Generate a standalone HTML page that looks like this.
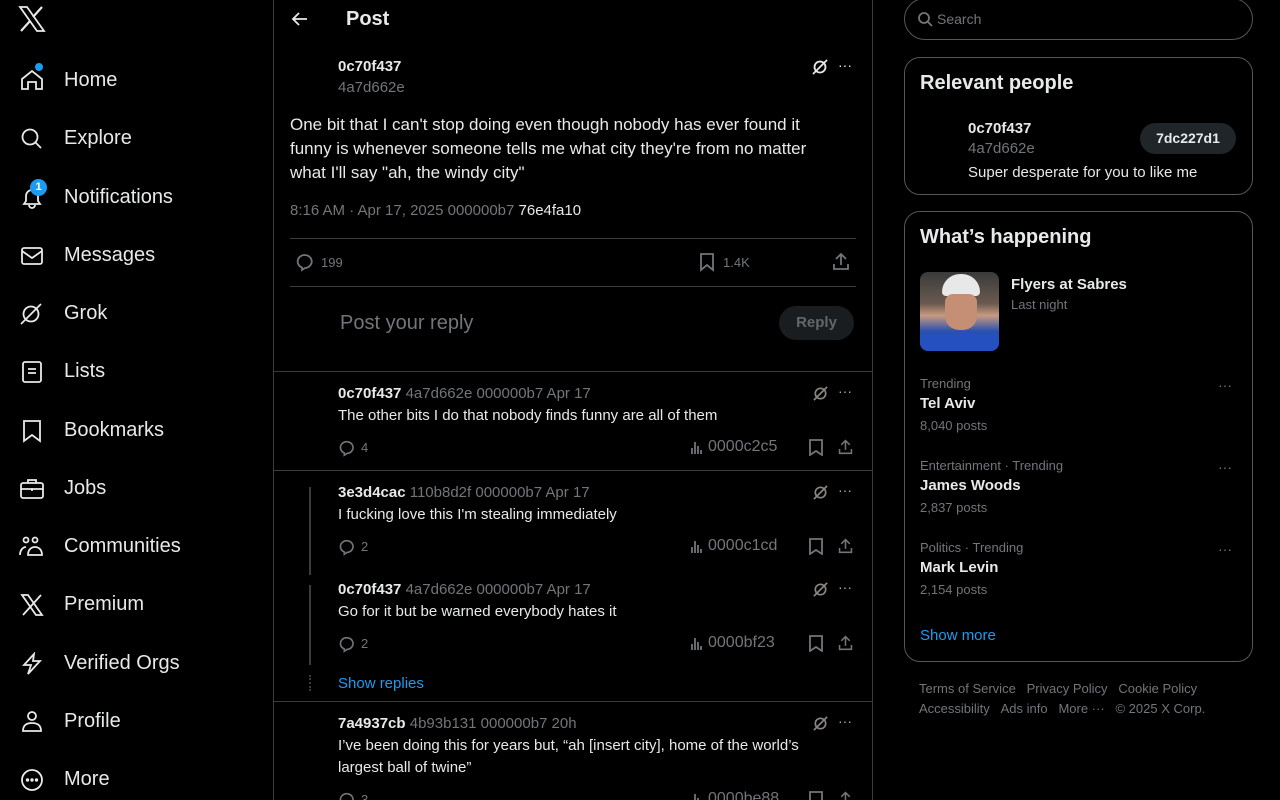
<!DOCTYPE html>
<html><head><meta charset="utf-8"><style>
*{box-sizing:border-box;margin:0;padding:0}
html{width:1280px;height:800px;overflow:hidden;background:#000}
body{width:1280px;height:800px;background:#000;color:#e7e9ea;font-family:"Liberation Sans",sans-serif;overflow:hidden;position:relative}
.a{position:absolute;white-space:nowrap}
.g{color:#71767b}
.b{font-weight:bold}
svg{position:absolute;fill:none;stroke:#e7e9ea;stroke-width:1.8}
.nav{font-size:20px;left:64px}
.line{position:absolute;background:#3e3b37}
.s15{font-size:15px}
.s13{font-size:13px}
.ic{stroke:#71767b}
</style></head><body>
<!-- left nav -->
<svg style="left:18px;top:6px" width="28" height="26" viewBox="0 0 28 26"><path d="M2 1h7l17 24h-7z" stroke-width="1.8"/><path d="M24 1L15 11M12 15L3 25" stroke-width="2.2"/></svg>
<svg style="left:20px;top:68px" width="24" height="24" viewBox="0 0 24 24"><path d="M2 11L12 3l10 8v10h-6v-7H8v7H2z"/></svg>
<div class="a" style="left:35px;top:63px;width:8px;height:8px;border-radius:50%;background:#1d9bf0"></div>
<svg style="left:20px;top:127px" width="24" height="24" viewBox="0 0 24 24"><circle cx="10" cy="10" r="7.5"/><path d="M15.5 15.5L21 21"/></svg>
<svg style="left:20px;top:186px" width="24" height="24" viewBox="0 0 24 24"><path d="M4 18h16l-2-3v-5a6 6 0 0 0-12 0v5z M9 19a3 3 0 0 0 6 0"/></svg>
<div class="a" style="left:30px;top:179px;width:17px;height:17px;border-radius:50%;background:#1d9bf0;font-size:11px;text-align:center;line-height:17px;color:#fff;font-weight:bold">1</div>
<svg style="left:20px;top:244px" width="24" height="24" viewBox="0 0 24 24"><rect x="2" y="4" width="20" height="16" rx="2"/><path d="M2 7l10 7 10-7"/></svg>
<svg style="left:18px;top:301px" width="26" height="26" viewBox="0 0 26 26"><circle cx="13" cy="13" r="7.5"/><path d="M23 3L3 23"/></svg>
<svg style="left:20px;top:360px" width="24" height="24" viewBox="0 0 24 24"><rect x="3" y="2" width="18" height="20" rx="2"/><path d="M8 9h8M8 13h8"/></svg>
<svg style="left:20px;top:419px" width="24" height="24" viewBox="0 0 24 24"><path d="M4 2h16v20l-8-6-8 6z"/></svg>
<svg style="left:20px;top:477px" width="24" height="24" viewBox="0 0 24 24"><rect x="1" y="6" width="22" height="15" rx="2"/><path d="M8 6V3h8v3M1 12h22M12 11v3"/></svg>
<svg style="left:18px;top:535px" width="26" height="24" viewBox="0 0 26 24"><circle cx="8" cy="5" r="2.5"/><circle cx="17" cy="5" r="2.5"/><path d="M2 20c0-5 3-8 6-8M10 20c0-5 3-8 7-8s7 3 7 8z"/></svg>
<svg style="left:20px;top:593px" width="24" height="24" viewBox="0 0 24 24"><path d="M2 2h6l14 20h-6z M21 2L3 22"/></svg>
<svg style="left:20px;top:652px" width="24" height="24" viewBox="0 0 24 24"><path d="M14 2L4 13h7l-3 9 12-13h-7z"/></svg>
<svg style="left:20px;top:710px" width="24" height="24" viewBox="0 0 24 24"><circle cx="12" cy="6" r="4"/><path d="M3 21c0-6 4-8 9-8s9 2 9 8z"/></svg>
<svg style="left:20px;top:768px" width="24" height="24" viewBox="0 0 24 24"><circle cx="12" cy="12" r="10"/><circle cx="7.5" cy="12" r=".8" fill="#e7e9ea"/><circle cx="12" cy="12" r=".8" fill="#e7e9ea"/><circle cx="16.5" cy="12" r=".8" fill="#e7e9ea"/></svg>
<div class="a nav" style="top:69px">Home</div>
<div class="a nav" style="top:127px">Explore</div>
<div class="a nav" style="top:186px">Notifications</div>
<div class="a nav" style="top:244px">Messages</div>
<div class="a nav" style="top:302px">Grok</div>
<div class="a nav" style="top:360px">Lists</div>
<div class="a nav" style="top:419px">Bookmarks</div>
<div class="a nav" style="top:477px">Jobs</div>
<div class="a nav" style="top:535px">Communities</div>
<div class="a nav" style="top:593px">Premium</div>
<div class="a nav" style="top:652px">Verified Orgs</div>
<div class="a nav" style="top:710px">Profile</div>
<div class="a nav" style="top:768px">More</div>

<!-- main -->
<div class="line" style="left:273px;top:0;width:1px;height:800px"></div>
<div class="line" style="left:872px;top:0;width:1px;height:800px"></div>
<svg style="left:290px;top:9px" width="20" height="20" viewBox="0 0 20 20"><path d="M17 10H4M9 4l-6 6 6 6"/></svg>
<div class="a b" style="left:346px;top:8px;font-size:20px">Post</div>

<div class="a b s15" style="left:338px;top:58px">0c70f437</div>
<div class="a g s15" style="left:338px;top:79px">4a7d662e</div>
<svg style="left:811px;top:58px" width="18" height="18" viewBox="0 0 18 18"><circle cx="9" cy="9" r="5.5"/><path d="M16 2L2 16"/></svg>
<div class="a" style="left:838px;top:57px;font-size:14px">···</div>
<div class="a" style="left:290px;top:113px;font-size:17px;line-height:24px;white-space:normal;width:540px">One bit that I can't stop doing even though nobody has ever found it funny is whenever someone tells me what city they're from no matter what I'll say "ah, the windy city"</div>
<div class="a g s15" style="left:290px;top:202px">8:16 AM · Apr 17, 2025 000000b7 <span style="color:#e7e9ea">76e4fa10</span></div>
<div class="line" style="left:290px;top:238px;width:566px;height:1px"></div>
<svg class="ic" style="left:295px;top:252px" width="20" height="20" viewBox="0 0 20 20"><path d="M7 15.5A7 6.5 0 1 1 10 16l-3 2z"/></svg>
<div class="a g" style="left:321px;top:255px;font-size:13px">199</div>
<svg class="ic" style="left:697px;top:252px" width="20" height="20" viewBox="0 0 20 20"><path d="M4 2h12v16l-6-5-6 5z"/></svg>
<div class="a g" style="left:723px;top:255px;font-size:13px">1.4K</div>
<svg class="ic" style="left:831px;top:251px" width="20" height="20" viewBox="0 0 20 20"><path d="M10 14V3M5 8l5-5 5 5M3 13v5h14v-5"/></svg>
<div class="line" style="left:290px;top:286px;width:566px;height:1px"></div>
<div class="a g" style="left:340px;top:312px;font-size:20px">Post your reply</div>
<div class="a b" style="left:779px;top:306px;width:75px;height:34px;border-radius:17px;background:#1a1d1f;color:#62676b;font-size:15px;text-align:center;line-height:34px">Reply</div>
<div class="line" style="left:274px;top:371px;width:598px;height:1px"></div>

<!-- replies -->
<div id="r"></div>
<div class="line" style="left:274px;top:470px;width:598px;height:1px"></div>
<div class="line" style="left:309px;top:487px;width:2px;height:88px"></div>
<div class="line" style="left:309px;top:585px;width:2px;height:80px"></div>
<div class="a" style="left:309px;top:675px;width:2px;height:16px;border-left:2px dotted #3e3b37"></div>
<div class="a s15" style="left:338px;top:675px;color:#1d9bf0">Show replies</div>
<div class="line" style="left:274px;top:701px;width:598px;height:1px"></div>

<!-- right -->
<div class="a" style="left:904px;top:-2px;width:349px;height:42px;border:1px solid #5a554e;border-radius:21px"></div>
<svg class="ic" style="left:917px;top:11px" width="16" height="16" viewBox="0 0 16 16"><circle cx="7" cy="7" r="5"/><path d="M11 11l4 4"/></svg>
<div class="a g" style="left:937px;top:11px;font-size:14px">Search</div>

<div class="a" style="left:904px;top:57px;width:349px;height:138px;border:1px solid #5a554e;border-radius:16px"></div>
<div class="a b" style="left:920px;top:72px;font-size:20px">Relevant people</div>
<div class="a b s15" style="left:968px;top:120px">0c70f437</div>
<div class="a g s15" style="left:968px;top:140px">4a7d662e</div>
<div class="a s15" style="left:968px;top:164px">Super desperate for you to like me</div>
<div class="a b" style="left:1140px;top:123px;width:96px;height:31px;border-radius:16px;background:#1f2528;font-size:14px;text-align:center;line-height:31px">7dc227d1</div>

<div class="a" style="left:904px;top:211px;width:349px;height:451px;border:1px solid #5a554e;border-radius:16px"></div>
<div class="a b" style="left:920px;top:226px;font-size:20px">What’s happening</div>
<div class="a" style="left:920px;top:272px;width:79px;height:79px;border-radius:8px;overflow:hidden;background:linear-gradient(#3a3a3a,#6a5a50 40%,#c89a80 55%,#2a50b0 75%,#2a50b0)">
<div style="position:absolute;left:22px;top:2px;width:38px;height:22px;border-radius:18px 18px 4px 4px;background:#e8e8e8"></div>
<div style="position:absolute;left:25px;top:22px;width:32px;height:36px;border-radius:8px 8px 14px 14px;background:#c58f75"></div>
<div style="position:absolute;left:0;top:62px;width:79px;height:17px;background:#2450c0"></div></div>
<div class="a b s15" style="left:1011px;top:276px">Flyers at Sabres</div>
<div class="a g s13" style="left:1011px;top:297px">Last night</div>
<div class="a g s13" style="left:920px;top:376px">Trending</div>
<div class="a b s15" style="left:920px;top:395px">Tel Aviv</div>
<div class="a g s13" style="left:920px;top:418px">8,040 posts</div>
<div class="a g s13" style="left:920px;top:458px">Entertainment · Trending</div>
<div class="a b s15" style="left:920px;top:477px">James Woods</div>
<div class="a g s13" style="left:920px;top:500px">2,837 posts</div>
<div class="a g s13" style="left:920px;top:540px">Politics · Trending</div>
<div class="a b s15" style="left:920px;top:559px">Mark Levin</div>
<div class="a g s13" style="left:920px;top:582px">2,154 posts</div>
<div class="a g" style="left:1218px;top:377px;font-size:14px">···</div>
<div class="a g" style="left:1218px;top:459px;font-size:14px">···</div>
<div class="a g" style="left:1218px;top:541px;font-size:14px">···</div>
<div class="a s15" style="left:920px;top:627px;color:#1d9bf0">Show more</div>
<div class="a g s13" style="left:919px;top:681px">Terms of Service &nbsp;&nbsp;Privacy Policy &nbsp;&nbsp;Cookie Policy</div>
<div class="a g s13" style="left:919px;top:701px">Accessibility &nbsp;&nbsp;Ads info &nbsp;&nbsp;More ··· &nbsp;&nbsp;© 2025 X Corp.</div>

<script>
const R=[[393,'0c70f437','4a7d662e 000000b7 Apr 17',['The other bits I do that nobody finds funny are all of them'],'4','0000c2c5'],
[492,'3e3d4cac','110b8d2f 000000b7 Apr 17',["I fucking love this I'm stealing immediately"],'2','0000c1cd'],
[589,'0c70f437','4a7d662e 000000b7 Apr 17',['Go for it but be warned everybody hates it'],'2','0000bf23'],
[723,'7a4937cb','4b93b131 000000b7 20h',['I’ve been doing this for years but, “ah [insert city], home of the world’s','largest ball of twine”'],'3','0000be88']];
let h='';
for(const [y,n,m,t,c,v] of R){
h+=`<div class="a s15" style="left:338px;top:${y-8}px"><b>${n}</b> <span class="g">${m}</span></div>`;
h+=`<svg style="left:812px;top:${y-8}px" width="17" height="17" viewBox="0 0 18 18"><circle cx="9" cy="9" r="5.5" stroke="#8a8580"/><path d="M16 2L2 16" stroke="#8a8580"/></svg>`;
h+=`<div class="a" style="left:838px;top:${y-10}px;font-size:14px;color:#aaa">···</div>`;
t.forEach((l,i)=>h+=`<div class="a s15" style="left:338px;top:${y+14+22*i}px">${l}</div>`);
const ay=y+54+22*(t.length-1);
h+=`<svg class="ic" style="left:338px;top:${ay-8}px" width="18" height="18" viewBox="0 0 20 20"><path d="M7 15.5A7 6.5 0 1 1 10 16l-3 2z"/></svg>`;
h+=`<div class="a g" style="left:361px;top:${ay-7}px;font-size:13px">${c}</div>`;
h+=`<svg class="ic" style="left:690px;top:${ay-8}px" width="16" height="16" viewBox="0 0 16 16"><path d="M2 15V9M5 15V3M8 15V7M11 15V11"/></svg>`;
h+=`<div class="a g" style="left:708px;top:${ay-9}px;font-size:16px">${v}</div>`;
h+=`<svg class="ic" style="left:808px;top:${ay-8}px" width="16" height="17" viewBox="0 0 16 17"><path d="M2 1h12v15l-6-4-6 4z"/></svg>`;
h+=`<svg class="ic" style="left:837px;top:${ay-9}px" width="17" height="17" viewBox="0 0 20 20"><path d="M10 14V3M5 8l5-5 5 5M3 13v5h14v-5"/></svg>`;
}
document.getElementById('r').outerHTML=h;
</script>
</body></html>
